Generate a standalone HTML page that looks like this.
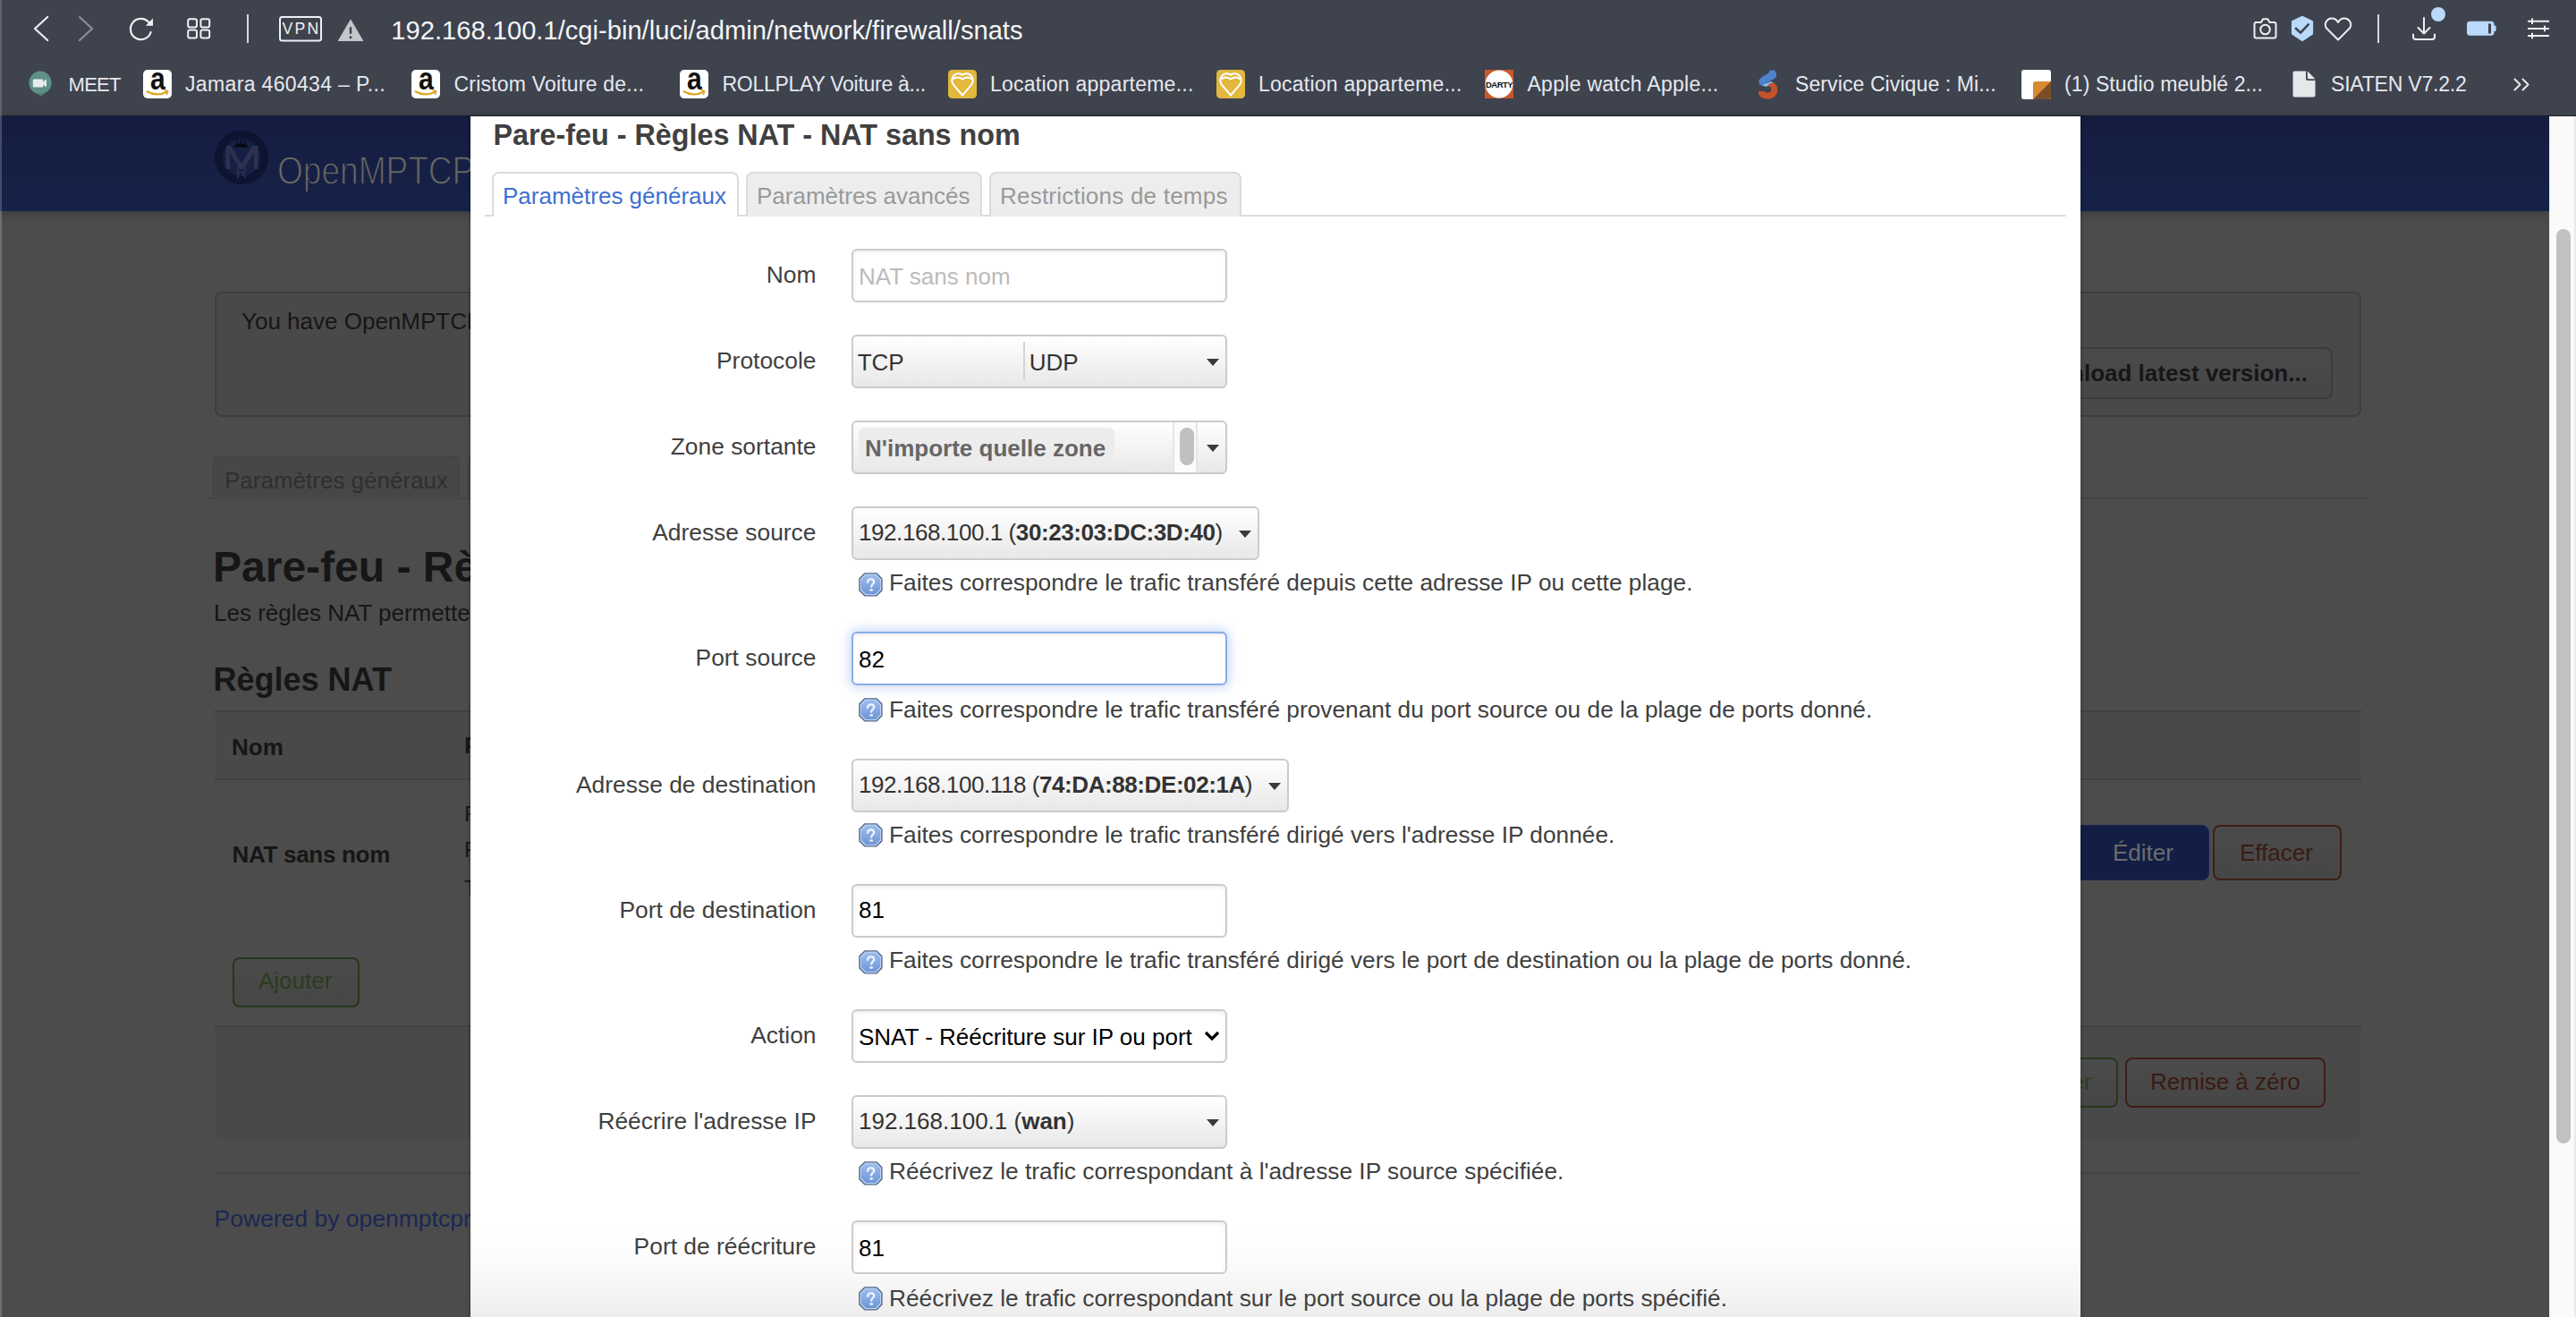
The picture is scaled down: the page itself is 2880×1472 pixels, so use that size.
<!DOCTYPE html>
<html><head><meta charset="utf-8">
<style>
*{box-sizing:border-box;margin:0;padding:0}
html,body{width:2880px;height:1472px;overflow:hidden}
body{position:relative;background:#4c4c4c;font-family:"Liberation Sans",sans-serif;}
.a{position:absolute;white-space:nowrap;line-height:1}
/* chrome */
#chrome{position:absolute;left:0;top:0;width:2880px;height:130px;background:#3e434e;border-bottom:1px solid #1d2027}
.bm{position:absolute;top:84px;font-size:23px;color:#e6e8ee;line-height:1}
/* page */
.dk{color:#161616}
#hdr{position:absolute;left:0;top:130px;width:2850px;height:106px;background:linear-gradient(#141d40,#172248)}
/* modal */
#modal{position:absolute;left:526px;top:130px;width:1800px;height:1342px;background:#fff;overflow:hidden;box-shadow:0 0 4px rgba(0,0,0,.35)}
.lbl{position:absolute;right:1413.5px;font-size:26.4px;color:#404040;line-height:1;white-space:nowrap}
.inp{position:absolute;left:426px;width:420px;height:60px;border:2px solid #cbcbcb;border-radius:6px;background:#fff;box-shadow:inset 0 2px 4px rgba(0,0,0,.07)}
.inp.focus{border-color:#88aee9;box-shadow:0 0 12px 3px rgba(120,160,230,.38),inset 0 2px 4px rgba(0,0,0,.07)}
.sel{position:absolute;left:426px;height:60px;border:2px solid #cbcbcb;border-radius:6px;background:linear-gradient(#ffffff,#e8e8e8)}
.txt{position:absolute;left:6px;font-size:26px;line-height:1;color:#333;white-space:nowrap}
.tri{position:absolute;width:0;height:0;border-left:7.6px solid transparent;border-right:7.6px solid transparent;border-top:8.4px solid #3a3a3a}
.badge{position:absolute;left:6px;top:6px;width:286px;height:44px;border-radius:6px;background:#ececec}
.zsep{position:absolute;left:357px;top:0;width:28px;height:56px;background:#fbfbfb;border-left:2px solid #e6e6e6;border-right:2px solid #e6e6e6}
.pill{position:absolute;left:6px;top:6px;width:16px;height:42px;border-radius:8px;background:#c0c0c0}
.help{position:absolute;left:433.5px;font-size:26.3px;color:#404040;line-height:1}
.help svg{position:absolute;left:0;top:0}
.help span{position:absolute;left:34.5px;white-space:nowrap}
.tab{position:absolute;top:62px;height:50px;border:2px solid #dcdcdc;border-bottom:none;border-radius:8px 8px 0 0;background:#ededed;font-size:26px;line-height:1;color:#999;white-space:nowrap}
.tab span{position:absolute;top:12px}
</style></head><body>

<div id="chrome">
<div style="position:absolute;left:0;top:0;width:2px;height:130px;background:#5d626c"></div>
<svg class="ic" style="position:absolute;left:0;top:0" width="2880" height="130" viewBox="0 0 2880 130">
 <!-- back -->
 <path d="M53.2 19 L39 32 L53.2 45" fill="none" stroke="#eef0f4" stroke-width="2.2" stroke-linecap="round" stroke-linejoin="round"/>
 <!-- forward -->
 <path d="M89 19 L103 32 L89 45" fill="none" stroke="#8b8f97" stroke-width="2.2" stroke-linecap="round" stroke-linejoin="round"/>
 <!-- reload -->
 <path d="M168.6 36 A11.6 11.6 0 1 1 166.2 24.8" fill="none" stroke="#eef0f4" stroke-width="2.2" stroke-linecap="round"/>
 <path d="M171 20.5 L171 28.8 L162.8 28.8 Z" fill="#eef0f4"/>
 <!-- grid -->
 <g fill="none" stroke="#eef0f4" stroke-width="2">
  <rect x="210.2" y="21.2" width="9.8" height="9.2" rx="2"/><rect x="224.4" y="21.2" width="9.8" height="9.2" rx="2"/>
  <rect x="210.2" y="33.4" width="9.8" height="9.2" rx="2"/><rect x="224.4" y="33.4" width="9.8" height="9.2" rx="2"/>
 </g>
 <!-- divider -->
 <rect x="276" y="16" width="2" height="32" fill="#d5d8de"/>
 <!-- VPN -->
 <rect x="313" y="19" width="46" height="26.5" rx="2.5" fill="none" stroke="#eef0f4" stroke-width="2"/>
 <text x="337" y="38.2" font-family="Liberation Sans" font-size="17.6" fill="#eef0f4" text-anchor="middle" letter-spacing="2.2">VPN</text>
 <!-- warning -->
 <path d="M392 22.5 L405.5 45.5 L378.5 45.5 Z" fill="#c4c6cb" stroke="#c4c6cb" stroke-width="1.2" stroke-linejoin="round"/>
 <rect x="390.8" y="30" width="2.4" height="8" rx="1" fill="#3e434e"/>
 <circle cx="392" cy="41.8" r="1.5" fill="#3e434e"/>
 <!-- camera -->
 <path d="M2520.5 27 Q2520.5 25 2522.5 25 L2527.8 25 L2530.2 21.3 L2535.2 21.3 L2537.6 25 L2542.5 25 Q2544.5 25 2544.5 27 L2544.5 40.5 Q2544.5 42.5 2542.5 42.5 L2522.5 42.5 Q2520.5 42.5 2520.5 40.5 Z" fill="none" stroke="#eef0f4" stroke-width="2"/>
 <circle cx="2532.5" cy="33" r="5.3" fill="none" stroke="#eef0f4" stroke-width="2"/>
 <!-- shield -->
 <path d="M2574 19.5 L2584.5 24.5 L2584.5 37.5 L2574 44.5 L2563.5 37.5 L2563.5 24.5 Z" fill="#b9dafa" stroke="#b9dafa" stroke-width="3.2" stroke-linejoin="round"/>
 <path d="M2566.8 31.8 L2572 36.6 L2580.8 27.4" fill="none" stroke="#3e434e" stroke-width="2.6" stroke-linecap="round" stroke-linejoin="round"/>
 <!-- heart -->
 <path d="M2614 44.5 L2601.5 32 Q2598.5 28.5 2600.5 24.5 Q2603 20.5 2607 20.5 Q2611.5 20.5 2614 25 Q2616.5 20.5 2621 20.5 Q2625 20.5 2627.5 24.5 Q2629.5 28.5 2626.5 32 Z" fill="none" stroke="#eef0f4" stroke-width="2" stroke-linejoin="round"/>
 <!-- divider -->
 <rect x="2658" y="16" width="2" height="32" fill="#d5d8de"/>
 <!-- download -->
 <path d="M2710 20 L2710 37 M2703.5 31 L2710 37.5 L2716.5 31" fill="none" stroke="#eef0f4" stroke-width="2" stroke-linecap="round" stroke-linejoin="round"/>
 <path d="M2698 38.5 L2698 41 Q2698 44 2701 44 L2719 44 Q2722 44 2722 41 L2722 38.5" fill="none" stroke="#eef0f4" stroke-width="2" stroke-linecap="round"/>
 <circle cx="2726" cy="16" r="8" fill="#b9dafa"/>
 <!-- battery -->
 <rect x="2758" y="23.8" width="30.5" height="16" rx="3.5" fill="#b9dafa"/>
 <rect x="2788" y="28.5" width="2.6" height="6.5" rx="1" fill="#b9dafa"/>
 <rect x="2782" y="26.5" width="3" height="11" fill="#3e434e"/>
 <!-- sliders -->
 <g stroke="#eef0f4" stroke-width="2" stroke-linecap="butt">
  <path d="M2826 23.8 L2850 23.8 M2826 32 L2850 32 M2826 40 L2850 40"/>
  <path d="M2831 20.5 L2831 27 M2845 28.8 L2845 35.2 M2831 36.8 L2831 43.2"/>
 </g>
 <!-- bookmark >> -->
 <path d="M2811.5 88.5 L2817.5 94.5 L2811.5 100.5 M2820.5 88.5 L2826.5 94.5 L2820.5 100.5" fill="none" stroke="#e6e8ee" stroke-width="2" stroke-linecap="round" stroke-linejoin="round"/>
</svg>
<div class="a" style="left:437.3px;top:19.5px;font-size:29.15px;color:#f4f5f7">192.168.100.1/cgi-bin/luci/admin/network/firewall/snats</div>
<!-- bookmarks -->
<svg style="position:absolute;left:31px;top:79px" width="27" height="30" viewBox="0 0 27 30">
 <path d="M13.5 0.5 A13 13 0 0 1 22.6 22.8 L13 29.5 L13 26.4 A13 13 0 0 1 13.5 0.5 Z" fill="#5f8f87"/>
 <path d="M13 26.4 L22.6 22.8 L13 29.5 Z" fill="#4f7a73"/>
 <rect x="5.8" y="9.6" width="11.6" height="8.8" rx="1.2" fill="#e9ecee"/>
 <path d="M17 12.8 L21 9.6 L21 18.4 L17 15.2 Z" fill="#e9ecee"/>
</svg>
<div class="bm" style="left:76.5px;top:84px;font-size:22px;letter-spacing:-0.7px">MEET</div>
<svg style="position:absolute;left:160px;top:78px" width="32" height="32" viewBox="0 0 32 32">
 <rect width="32" height="32" rx="5" fill="#fff"/>
 <text x="16.3" y="22.3" font-family="Liberation Sans" font-weight="700" font-size="35" fill="#111" text-anchor="middle" transform="translate(16.3 0) scale(0.86 1) translate(-16.3 0)">a</text>
 <path d="M4.5 24.3 Q15 30.5 27 24.5" fill="none" stroke="#e0a528" stroke-width="2.2" stroke-linecap="round"/>
 <path d="M24 22.6 L27.6 24 L26.4 27.4" fill="none" stroke="#e0a528" stroke-width="1.6" stroke-linecap="round"/>
</svg>
<svg style="position:absolute;left:460px;top:78px" width="32" height="32" viewBox="0 0 32 32">
 <rect width="32" height="32" rx="5" fill="#fff"/>
 <text x="16.3" y="22.3" font-family="Liberation Sans" font-weight="700" font-size="35" fill="#111" text-anchor="middle" transform="translate(16.3 0) scale(0.86 1) translate(-16.3 0)">a</text>
 <path d="M4.5 24.3 Q15 30.5 27 24.5" fill="none" stroke="#e0a528" stroke-width="2.2" stroke-linecap="round"/>
 <path d="M24 22.6 L27.6 24 L26.4 27.4" fill="none" stroke="#e0a528" stroke-width="1.6" stroke-linecap="round"/>
</svg>
<svg style="position:absolute;left:760px;top:78px" width="32" height="32" viewBox="0 0 32 32">
 <rect width="32" height="32" rx="5" fill="#fff"/>
 <text x="16.3" y="22.3" font-family="Liberation Sans" font-weight="700" font-size="35" fill="#111" text-anchor="middle" transform="translate(16.3 0) scale(0.86 1) translate(-16.3 0)">a</text>
 <path d="M4.5 24.3 Q15 30.5 27 24.5" fill="none" stroke="#e0a528" stroke-width="2.2" stroke-linecap="round"/>
 <path d="M24 22.6 L27.6 24 L26.4 27.4" fill="none" stroke="#e0a528" stroke-width="1.6" stroke-linecap="round"/>
</svg>

<div class="bm" style="left:207px;top:83px;letter-spacing:0.35px">Jamara 460434 – P...</div>
<div class="bm" style="left:507.5px;top:83px;letter-spacing:0.2px">Cristom Voiture de...</div>
<div class="bm" style="left:807.5px;top:83px;letter-spacing:-0.27px">ROLLPLAY Voiture à...</div>
<svg style="position:absolute;left:1060px;top:78px" width="32" height="32" viewBox="0 0 32 32">
 <rect width="32" height="32" rx="4.5" fill="#e2b83e"/>
 <path d="M16 28.5 L6.5 17.5 Q3.2 13 4.8 9 Q7 4.2 12 4.2 Q14.5 4.2 16 5.8 Q17.5 4.2 20 4.2 Q25 4.2 27.2 9 Q28.8 13 25.5 17.5 Z" fill="none" stroke="#fff" stroke-width="2"/>
 <path d="M5.5 10.5 Q10 6.5 16 10.5 Q22 6.5 26.5 10.5" fill="none" stroke="#fff" stroke-width="2"/>
</svg>
<svg style="position:absolute;left:1360px;top:78px" width="32" height="32" viewBox="0 0 32 32">
 <rect width="32" height="32" rx="4.5" fill="#e2b83e"/>
 <path d="M16 28.5 L6.5 17.5 Q3.2 13 4.8 9 Q7 4.2 12 4.2 Q14.5 4.2 16 5.8 Q17.5 4.2 20 4.2 Q25 4.2 27.2 9 Q28.8 13 25.5 17.5 Z" fill="none" stroke="#fff" stroke-width="2"/>
 <path d="M5.5 10.5 Q10 6.5 16 10.5 Q22 6.5 26.5 10.5" fill="none" stroke="#fff" stroke-width="2"/>
</svg>

<div class="bm" style="left:1107px;top:83px;letter-spacing:0.24px">Location apparteme...</div>
<div class="bm" style="left:1407px;top:83px;letter-spacing:0.24px">Location apparteme...</div>
<svg style="position:absolute;left:1660px;top:78px" width="32" height="32" viewBox="0 0 32 32">
 <rect width="32" height="32" fill="#c9592a"/><circle cx="16" cy="16" r="15.4" fill="#fff"/>
 <text x="16" y="20" font-family="Liberation Sans" font-weight="700" font-size="9.6" fill="#111" text-anchor="middle" letter-spacing="-0.6">DARTY</text>
</svg>
<div class="bm" style="left:1707.5px;top:83px;letter-spacing:0.28px">Apple watch Apple...</div>
<svg style="position:absolute;left:1964px;top:78px" width="24" height="33" viewBox="0 0 24 33">
 <path d="M15 0.5 L20 0.5 L22 4 L22 8 L18 11 L10 15 L6 18 L3 16 L2 12 L6 8 L13 4 Z" fill="#4d82cf"/>
 <path d="M6 17 L16 13 L19 15 L10 19 Z" fill="#8ec0e8"/>
 <path d="M14 15 L20 15 L23 19 L23 26 L19 31 L13 33 L5 31 L2 27 L2 24 L8 24 L12 26 L16 24 L16 20 L13 18 Z" fill="#c6522b"/>
</svg>
<div class="bm" style="left:2007px;top:83px;letter-spacing:0.1px">Service Civique : Mi...</div>
<svg style="position:absolute;left:2260px;top:78px" width="33" height="33" viewBox="0 0 33 33">
 <rect width="33" height="33" rx="3" fill="#fff"/>
 <path d="M16 13 L33 13 L33 30 Q33 33 30 33 L13 33 L13 16 Q13 13 16 13 Z" fill="#d88a32"/>
 <path d="M33 13 L33 30 Q33 33 30 33 L13 33 Z" fill="#7a4e26"/>
</svg>
<div class="bm" style="left:2308px;top:83px;letter-spacing:0.1px">(1) Studio meublé 2...</div>
<svg style="position:absolute;left:2563px;top:79px" width="26" height="30" viewBox="0 0 26 30">
 <path d="M2.5 0.5 L15 0.5 L25.5 11 L25.5 27.5 Q25.5 29.5 23.5 29.5 L2.5 29.5 Q0.5 29.5 0.5 27.5 L0.5 2.5 Q0.5 0.5 2.5 0.5 Z" fill="#e6e7ea"/>
 <path d="M15 0.5 L15 9 Q15 11 17 11 L25.5 11 Z" fill="#3e434e"/>
 <path d="M16.8 0.5 L25.5 9.2 L18 9.2 Q16.8 9.2 16.8 8 Z" fill="#e6e7ea"/>
</svg>
<div class="bm" style="left:2606px;top:83px;letter-spacing:-0.2px">SIATEN V7.2.2</div>
</div>

<div id="page">
<div id="hdr" style="box-shadow:0 2px 10px rgba(0,0,0,.25)"></div>
<div style="position:absolute;left:0;top:130px;width:2px;height:1342px;background:rgba(255,255,255,.2)"></div>
<!-- logo -->
<svg style="position:absolute;left:236px;top:142px" width="70" height="70" viewBox="0 0 70 70">
 <circle cx="34" cy="34" r="25.5" fill="none" stroke="#0c1431" stroke-width="9"/>
 <path d="M16.5 47 L16.5 21 L22 21 L34 40.5 L46 21 L52.5 21 L52.5 47 L48 47 L48 28.5 L36 47 L32 47 L21 28.5 L21 47 Z" fill="#2a324f"/>
 <text x="34" y="56.8" font-family="Liberation Sans" font-size="17.5" fill="#2a324f" text-anchor="middle">R</text>
 <path d="M25.5 22.5 Q26 18.5 33.5 18.5 Q41 18.5 41.5 22.5 Z" fill="#06080f"/>
 <path d="M29 19 L29 14 M33.5 18.6 L33.5 13.5 M38 19 L38 14" stroke="#06080f" stroke-width="0.8"/>
</svg>
<svg style="position:absolute;left:300px;top:160px" width="226" height="60" viewBox="0 0 226 60"><defs><filter id="thin" x="-5%" y="-5%" width="110%" height="110%"><feMorphology operator="erode" radius="0.3"/></filter></defs><text x="10" y="46" font-family="Liberation Sans" font-size="43.6" fill="#6a6962" stroke="#152046" stroke-width="1.3" transform="scale(0.85,1)" transform-origin="10 0">OpenMPTCP</text></svg>
<!-- alert -->
<div style="position:absolute;left:240px;top:326px;width:2400px;height:140px;border:2px solid #3e3e3e;border-radius:8px;background:#494949"></div>
<div class="a dk" style="left:270px;top:346px;font-size:26px">You have OpenMPTCProuter</div>
<div style="position:absolute;left:2200px;top:388px;width:408px;height:58px;border:2px solid #3b3b3b;border-radius:8px;background:linear-gradient(#4b4b4b,#464646)"></div>
<div class="a dk" style="left:2259.2px;top:404.2px;font-size:26px;font-weight:700">Download latest version...</div>
<!-- tab -->
<div style="position:absolute;left:230px;top:556px;width:2420px;height:2px;background:#444"></div>
<div style="position:absolute;left:238px;top:509px;width:276px;height:49px;border:2px solid #444;border-bottom:none;border-radius:8px 8px 0 0;background:#474747"></div>
<div class="a" style="left:251px;top:524.2px;font-size:26px;color:#2f2f2f">Paramètres généraux</div>
<div style="position:absolute;left:523px;top:509px;width:20px;height:49px;border:2px solid #444;border-bottom:none;border-radius:8px 0 0 0;background:#474747"></div>
<!-- headings -->
<div class="a dk" style="left:238px;top:610px;font-size:48px;font-weight:700">Pare-feu - Règles NAT</div>
<div class="a dk" style="left:239px;top:671.5px;font-size:26px">Les règles NAT permettent</div>
<div class="a dk" style="left:238.5px;top:741.8px;font-size:36px;font-weight:700">Règles NAT</div>
<!-- table -->
<div style="position:absolute;left:240px;top:794px;width:2400px;height:78px;background:#494949;border-top:2px solid #404040;border-bottom:2px solid #404040"></div>
<div class="a dk" style="left:259px;top:822.1px;font-size:26px;font-weight:700">Nom</div>
<div class="a dk" style="left:519px;top:820.3px;font-size:26px;font-weight:700">Pare</div>
<div class="a dk" style="left:259.5px;top:942.2px;font-size:26px;font-weight:700;letter-spacing:-0.3px">NAT sans nom</div>
<div class="a dk" style="left:519px;top:897.5px;font-size:24px">From</div>
<div class="a dk" style="left:519px;top:937.5px;font-size:24px">Forw</div>
<div class="a dk" style="left:519px;top:981px;font-size:24px">To</div>
<!-- Ajouter -->
<div style="position:absolute;left:260px;top:1070px;width:142px;height:56px;border:2px solid #273719;border-radius:8px;background:linear-gradient(#4b4b4b,#464646)"></div>
<div class="a" style="left:289px;top:1083.4px;font-size:26px;color:#2b3c1e">Ajouter</div>
<!-- page actions -->
<div style="position:absolute;left:240px;top:1146px;width:2400px;height:127px;background:#494949;border-top:2px solid #424242;border-radius:0 0 8px 8px"></div>
<div style="position:absolute;left:2200px;top:1182px;width:168px;height:56px;border:2px solid #273719;border-radius:8px;background:linear-gradient(#4b4b4b,#464646)"></div>
<div class="a" style="left:2256px;top:1195.6px;font-size:26px;color:#2c3e1f">Sauver</div>
<div style="position:absolute;left:2376px;top:1182px;width:224px;height:56px;border:2px solid #3f1e17;border-radius:8px;background:linear-gradient(#4b4b4b,#464646)"></div>
<div class="a" style="left:2404px;top:1195.6px;font-size:26px;color:#3a1a12">Remise à zéro</div>
<!-- edit / delete -->
<div style="position:absolute;left:2300px;top:922px;width:170px;height:62px;border-radius:8px;background:#131e45;border:1px solid #1a2550"></div>
<div class="a" style="left:2362px;top:940px;font-size:26px;color:#6c6c6c">Éditer</div>
<div style="position:absolute;left:2474px;top:922px;width:144px;height:62px;border:2px solid #3f1e17;border-radius:8px;background:linear-gradient(#4b4b4b,#464646)"></div>
<div class="a" style="left:2504px;top:940px;font-size:26px;color:#3a1a12">Effacer</div>
<!-- footer -->
<div style="position:absolute;left:240px;top:1310px;width:2400px;height:2px;background:#444"></div>
<div class="a" style="left:239.5px;top:1349.2px;font-size:26.5px;color:#1a2853">Powered by openmptcprouter</div>
<!-- scrollbar -->
<div style="position:absolute;left:2850px;top:130px;width:30px;height:1342px;background:#fafafa;border-left:1px solid #e8e8e8"></div>
<div style="position:absolute;left:2858px;top:256px;width:16px;height:1022px;border-radius:8px;background:#c1c1c1"></div>
<div style="position:absolute;left:2878px;top:130px;width:2px;height:1342px;background:#e9e9e9"></div>
</div>


<div id="modal">
<div style="position:absolute;left:0;top:1238px;width:1800px;height:104px;background:linear-gradient(rgba(0,0,0,0),rgba(0,0,0,.012) 35%,rgba(0,0,0,.035) 65%,rgba(0,0,0,.07))"></div>
<div class="a" style="left:25.5px;top:5.2px;font-size:32.3px;font-weight:700;color:#404040">Pare-feu - Règles NAT - NAT sans nom</div>
<div style="position:absolute;left:16px;top:110px;width:1768px;height:2px;background:#dcdcdc"></div>
<div class="tab" style="left:24px;width:276px;background:#fff;height:50px;color:#3f6fd1"><span style="left:10px">Paramètres généraux</span></div>
<div class="tab" style="left:308px;width:264px"><span style="left:10px">Paramètres avancés</span></div>
<div class="tab" style="left:580px;width:282px"><span style="left:10px;letter-spacing:0.22px">Restrictions de temps</span></div>
<div class="lbl" style="top:163.8px">Nom</div>
<div class="inp" style="top:148px"><div class="txt" style="top:15.9px;color:#bbb">NAT sans nom</div></div>
<div class="lbl" style="top:259.8px">Protocole</div>
<div class="sel" style="top:244px;width:420px"><div class="txt" style="left:4.7px;top:15.6px">TCP</div><div style="position:absolute;left:190px;top:6px;width:2px;height:43px;background:#d4d4d4"></div><div class="txt" style="left:196.7px;top:15.6px">UDP</div><div class="tri" style="right:7px;top:24.5px"></div></div>
<div class="lbl" style="top:355.8px">Zone sortante</div>
<div class="sel" style="top:340px;width:420px"><div class="badge"><div class="txt" style="left:7px;top:9.9px;font-weight:700;color:#666">N'importe quelle zone</div></div><div class="zsep"><div class="pill"></div></div><div class="tri" style="right:7px;top:24.5px"></div></div>
<div class="lbl" style="top:451.8px">Adresse source</div>
<div class="sel" style="top:436px;width:456px"><div class="txt" style="top:14.1px;letter-spacing:-0.42px;">192.168.100.1 (<b>30:23:03:DC:3D:40</b>)</div><div class="tri" style="right:7px;top:24.5px"></div></div>
<div class="lbl" style="top:591.8px">Port source</div>
<div class="inp focus" style="top:576px"><div class="txt" style="top:16.2px;color:#000">82</div></div>
<div class="lbl" style="top:733.8px">Adresse de destination</div>
<div class="sel" style="top:718px;width:489px"><div class="txt" style="top:14.1px;letter-spacing:-0.42px;">192.168.100.118 (<b>74:DA:88:DE:02:1A</b>)</div><div class="tri" style="right:7px;top:24.5px"></div></div>
<div class="lbl" style="top:873.8px">Port de destination</div>
<div class="inp" style="top:858px"><div class="txt" style="top:14.1px;color:#000">81</div></div>
<div class="lbl" style="top:1013.8px">Action</div>
<div class="inp act" style="top:998px"><div class="txt" style="top:15.8px;color:#000">SNAT - Réécriture sur IP ou port</div><svg style="position:absolute;right:6px;top:22px" width="18" height="13" viewBox="0 0 18 13"><path d="M2 2 L9 9 L16 2" fill="none" stroke="#000" stroke-width="3.2"/></svg></div>
<div class="lbl" style="top:1109.8px">Réécrire l'adresse IP</div>
<div class="sel" style="top:1094px;width:420px"><div class="txt" style="top:14.1px;">192.168.100.1 (<b>wan</b>)</div><div class="tri" style="right:7px;top:24.5px"></div></div>
<div class="lbl" style="top:1249.8px">Port de réécriture</div>
<div class="inp" style="top:1234px"><div class="txt" style="top:16.0px;color:#000">81</div></div>
<div class="help" style="top:509.5px"><svg width="27" height="27" viewBox="0 0 27 27"><defs><linearGradient id="hg" x1="0" y1="0" x2="0" y2="1"><stop offset="0" stop-color="#9dbdee"/><stop offset="1" stop-color="#6e96d6"/></linearGradient></defs><path d="M6.50 0.20 H20.30 L26.60 6.50 V20.30 L20.30 26.60 H6.50 L0.20 20.30 V6.50 Z" fill="#56698b"/><path d="M7.30 1.60 H19.50 L25.20 7.30 V19.50 L19.50 25.20 H7.30 L1.60 19.50 V7.30 Z" fill="#bcd3f4"/><path d="M8.00 2.80 H18.80 L24.00 8.00 V18.80 L18.80 24.00 H8.00 L2.80 18.80 V8.00 Z" fill="url(#hg)"/><path d="M10 10.8 C10.2 8.4 11.8 7.3 13.7 7.3 C15.8 7.3 17.2 8.5 17.2 10.3 C17.2 12.6 14.4 12.9 14.2 15.6" fill="none" stroke="#eef3fc" stroke-width="2.3" stroke-linecap="round"/><ellipse cx="14.1" cy="19.6" rx="2.0" ry="1.25" fill="#eef3fc"/></svg><span style="top:-1.86px">Faites correspondre le trafic transféré depuis cette adresse IP ou cette plage.</span></div>
<div class="help" style="top:649.5px"><svg width="27" height="27" viewBox="0 0 27 27"><defs><linearGradient id="hg" x1="0" y1="0" x2="0" y2="1"><stop offset="0" stop-color="#9dbdee"/><stop offset="1" stop-color="#6e96d6"/></linearGradient></defs><path d="M6.50 0.20 H20.30 L26.60 6.50 V20.30 L20.30 26.60 H6.50 L0.20 20.30 V6.50 Z" fill="#56698b"/><path d="M7.30 1.60 H19.50 L25.20 7.30 V19.50 L19.50 25.20 H7.30 L1.60 19.50 V7.30 Z" fill="#bcd3f4"/><path d="M8.00 2.80 H18.80 L24.00 8.00 V18.80 L18.80 24.00 H8.00 L2.80 18.80 V8.00 Z" fill="url(#hg)"/><path d="M10 10.8 C10.2 8.4 11.8 7.3 13.7 7.3 C15.8 7.3 17.2 8.5 17.2 10.3 C17.2 12.6 14.4 12.9 14.2 15.6" fill="none" stroke="#eef3fc" stroke-width="2.3" stroke-linecap="round"/><ellipse cx="14.1" cy="19.6" rx="2.0" ry="1.25" fill="#eef3fc"/></svg><span style="top:0.04px">Faites correspondre le trafic transféré provenant du port source ou de la plage de ports donné.</span></div>
<div class="help" style="top:789.5px"><svg width="27" height="27" viewBox="0 0 27 27"><defs><linearGradient id="hg" x1="0" y1="0" x2="0" y2="1"><stop offset="0" stop-color="#9dbdee"/><stop offset="1" stop-color="#6e96d6"/></linearGradient></defs><path d="M6.50 0.20 H20.30 L26.60 6.50 V20.30 L20.30 26.60 H6.50 L0.20 20.30 V6.50 Z" fill="#56698b"/><path d="M7.30 1.60 H19.50 L25.20 7.30 V19.50 L19.50 25.20 H7.30 L1.60 19.50 V7.30 Z" fill="#bcd3f4"/><path d="M8.00 2.80 H18.80 L24.00 8.00 V18.80 L18.80 24.00 H8.00 L2.80 18.80 V8.00 Z" fill="url(#hg)"/><path d="M10 10.8 C10.2 8.4 11.8 7.3 13.7 7.3 C15.8 7.3 17.2 8.5 17.2 10.3 C17.2 12.6 14.4 12.9 14.2 15.6" fill="none" stroke="#eef3fc" stroke-width="2.3" stroke-linecap="round"/><ellipse cx="14.1" cy="19.6" rx="2.0" ry="1.25" fill="#eef3fc"/></svg><span style="top:0.04px">Faites correspondre le trafic transféré dirigé vers l'adresse IP donnée.</span></div>
<div class="help" style="top:931.5999999999999px"><svg width="27" height="27" viewBox="0 0 27 27"><defs><linearGradient id="hg" x1="0" y1="0" x2="0" y2="1"><stop offset="0" stop-color="#9dbdee"/><stop offset="1" stop-color="#6e96d6"/></linearGradient></defs><path d="M6.50 0.20 H20.30 L26.60 6.50 V20.30 L20.30 26.60 H6.50 L0.20 20.30 V6.50 Z" fill="#56698b"/><path d="M7.30 1.60 H19.50 L25.20 7.30 V19.50 L19.50 25.20 H7.30 L1.60 19.50 V7.30 Z" fill="#bcd3f4"/><path d="M8.00 2.80 H18.80 L24.00 8.00 V18.80 L18.80 24.00 H8.00 L2.80 18.80 V8.00 Z" fill="url(#hg)"/><path d="M10 10.8 C10.2 8.4 11.8 7.3 13.7 7.3 C15.8 7.3 17.2 8.5 17.2 10.3 C17.2 12.6 14.4 12.9 14.2 15.6" fill="none" stroke="#eef3fc" stroke-width="2.3" stroke-linecap="round"/><ellipse cx="14.1" cy="19.6" rx="2.0" ry="1.25" fill="#eef3fc"/></svg><span style="top:-2.05px">Faites correspondre le trafic transféré dirigé vers le port de destination ou la plage de ports donné.</span></div>
<div class="help" style="top:1167.6px"><svg width="27" height="27" viewBox="0 0 27 27"><defs><linearGradient id="hg" x1="0" y1="0" x2="0" y2="1"><stop offset="0" stop-color="#9dbdee"/><stop offset="1" stop-color="#6e96d6"/></linearGradient></defs><path d="M6.50 0.20 H20.30 L26.60 6.50 V20.30 L20.30 26.60 H6.50 L0.20 20.30 V6.50 Z" fill="#56698b"/><path d="M7.30 1.60 H19.50 L25.20 7.30 V19.50 L19.50 25.20 H7.30 L1.60 19.50 V7.30 Z" fill="#bcd3f4"/><path d="M8.00 2.80 H18.80 L24.00 8.00 V18.80 L18.80 24.00 H8.00 L2.80 18.80 V8.00 Z" fill="url(#hg)"/><path d="M10 10.8 C10.2 8.4 11.8 7.3 13.7 7.3 C15.8 7.3 17.2 8.5 17.2 10.3 C17.2 12.6 14.4 12.9 14.2 15.6" fill="none" stroke="#eef3fc" stroke-width="2.3" stroke-linecap="round"/><ellipse cx="14.1" cy="19.6" rx="2.0" ry="1.25" fill="#eef3fc"/></svg><span style="top:-1.86px">Réécrivez le trafic correspondant à l'adresse IP source spécifiée.</span></div>
<div class="help" style="top:1307.6px"><svg width="27" height="27" viewBox="0 0 27 27"><defs><linearGradient id="hg" x1="0" y1="0" x2="0" y2="1"><stop offset="0" stop-color="#9dbdee"/><stop offset="1" stop-color="#6e96d6"/></linearGradient></defs><path d="M6.50 0.20 H20.30 L26.60 6.50 V20.30 L20.30 26.60 H6.50 L0.20 20.30 V6.50 Z" fill="#56698b"/><path d="M7.30 1.60 H19.50 L25.20 7.30 V19.50 L19.50 25.20 H7.30 L1.60 19.50 V7.30 Z" fill="#bcd3f4"/><path d="M8.00 2.80 H18.80 L24.00 8.00 V18.80 L18.80 24.00 H8.00 L2.80 18.80 V8.00 Z" fill="url(#hg)"/><path d="M10 10.8 C10.2 8.4 11.8 7.3 13.7 7.3 C15.8 7.3 17.2 8.5 17.2 10.3 C17.2 12.6 14.4 12.9 14.2 15.6" fill="none" stroke="#eef3fc" stroke-width="2.3" stroke-linecap="round"/><ellipse cx="14.1" cy="19.6" rx="2.0" ry="1.25" fill="#eef3fc"/></svg><span style="top:0.05px">Réécrivez le trafic correspondant sur le port source ou la plage de ports spécifié.</span></div>
</div>

</body></html>
